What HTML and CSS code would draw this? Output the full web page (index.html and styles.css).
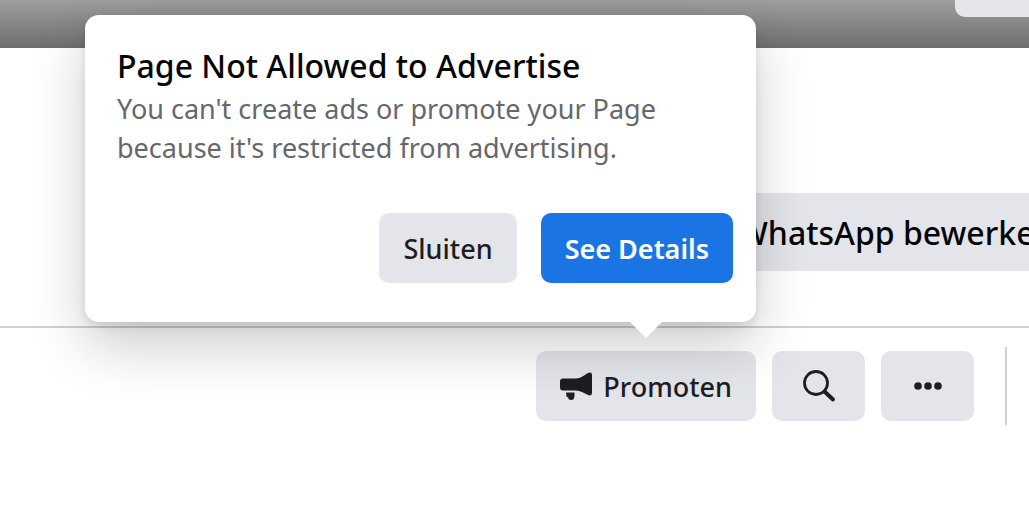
FILE: index.html
```
<!DOCTYPE html>
<html lang="nl">
<head>
    <meta charset="UTF-8">
    <meta name="viewport" content="width=device-width, initial-scale=1.0">
    <title>Pagina</title>
    <link rel="stylesheet" href="styles.css">
</head>
<body>
    <div class="cover">
        <button class="cover-btn" aria-label="Omslagfoto bewerken"></button>
    </div>

    <main>
        <div class="profile">
            <button class="whatsapp-btn">WhatsApp bewerken</button>
        </div>

        <div class="toolbar">
            <div class="promote">
                <button class="btn">
                    <svg class="icon-promote" width="33" height="30" viewBox="0 0 33 30" aria-hidden="true">
                        <path d="M3 7.5H16C20 7.5 24 4.5 27 2.5Q32 0 32 4V22Q32 26 27 23.500C24 22 20 19.500 16 19.500H3Q0 19.500 0 16.500V10.500Q0 7.500 3 7.500Z"/>
                        <path d="M6 21.500H14.500V24.500Q14.500 29 11 29Q8.500 29 8 26.500L6.500 25.500Z"/>
                    </svg>
                    Promoten
                </button>

                <!-- Popover above the promote button -->
                <div class="popover" role="dialog" aria-labelledby="popover-title">
                    <h2 id="popover-title">Page Not Allowed to Advertise</h2>
                    <p>You can't create ads or promote your Page because it's restricted from advertising.</p>
                    <div class="popover-actions">
                        <button class="btn">Sluiten</button>
                        <button class="btn btn-primary">See Details</button>
                    </div>
                </div>
            </div>

            <button class="btn btn-icon" aria-label="Zoeken">
                <svg width="34" height="34" viewBox="0 0 34 34" aria-hidden="true">
                    <circle cx="14" cy="14" r="11.5" fill="none" stroke="#1c1e21" stroke-width="2.8"/>
                    <path d="M22.500 22.500L31 30.500" stroke="#1c1e21" stroke-width="4" stroke-linecap="round"/>
                </svg>
            </button>
            <button class="btn btn-icon" aria-label="Meer">
                <svg width="28" height="8" viewBox="0 0 28 8" aria-hidden="true">
                    <circle cx="4" cy="4" r="3.8"/>
                    <circle cx="14" cy="4" r="3.8"/>
                    <circle cx="24" cy="4" r="3.8"/>
                </svg>
            </button>
            <div class="divider"></div>
        </div>
    </main>
</body>
</html>
```

FILE: styles.css
```
* {
    box-sizing: border-box;
}
body {
    margin: 0;
    background-color: #ffffff;
    color: #1c1e21;
    font-family: "Segoe UI", "Noto Sans", sans-serif;
    font-size: 27px;
    overflow-x: hidden;
}
button {
    border: none;
    font: inherit;
    color: inherit;
    cursor: pointer;
}
.cover {
    display: flex;
    justify-content: flex-end;
    align-items: flex-start;
    height: 48px;
    background: linear-gradient(#9e9e9e, #6e6e6e);
}
.cover-btn {
    width: 74px;
    height: 17px;
    background-color: #e4e6eb;
    border-radius: 0 0 0 10px;
}
.profile {
    padding-top: 145px;
    padding-bottom: 55px;
    padding-left: 68%;
    border-bottom: 2px solid #ced0d4;
    overflow: hidden;
}
.whatsapp-btn {
    height: 78px;
    padding: 0 38px;
    background-color: #e4e5ea;
    color: #050505;
    font-size: 32px;
    font-weight: 500;
    white-space: nowrap;
}
.toolbar {
    display: flex;
    justify-content: flex-end;
    align-items: center;
    gap: 16px;
    padding: 19px 22px;
}
.promote {
    position: relative;
}
.btn {
    display: flex;
    align-items: center;
    justify-content: center;
    gap: 10px;
    height: 70px;
    padding: 0 24px;
    background-color: #e4e5ea;
    border-radius: 10px;
    font-weight: 500;
    white-space: nowrap;
}
.btn svg {
    fill: #1c1e21;
}
.btn-primary {
    background-color: #1b74e4;
    color: #ffffff;
    font-weight: 600;
}
.btn-icon {
    width: 93px;
}
.divider {
    width: 2px;
    height: 78px;
    margin-left: 15px;
    background-color: #ced0d4;
}
.popover {
    position: absolute;
    right: 0;
    bottom: calc(100% + 29px);
    width: 671px;
    padding: 31px 23px 39px 32px;
    background-color: #ffffff;
    border-radius: 14px;
    box-shadow: 0 24px 56px rgba(0, 0, 0, 0.2), 0 4px 8px rgba(0, 0, 0, 0.1);
}
.popover::after {
    content: "";
    position: absolute;
    right: 94px;
    top: 100%;
    border: 16px solid transparent;
    border-top-color: #ffffff;
    border-bottom: none;
}
.popover h2 {
    margin: 0 0 3px;
    font-size: 32px;
    font-weight: 500;
    line-height: 40px;
    color: #050505;
}
.popover p {
    margin: 0 0 46px;
    color: #65676b;
    line-height: 39px;
}
.popover-actions {
    display: flex;
    justify-content: flex-end;
    gap: 24px;
}
```
